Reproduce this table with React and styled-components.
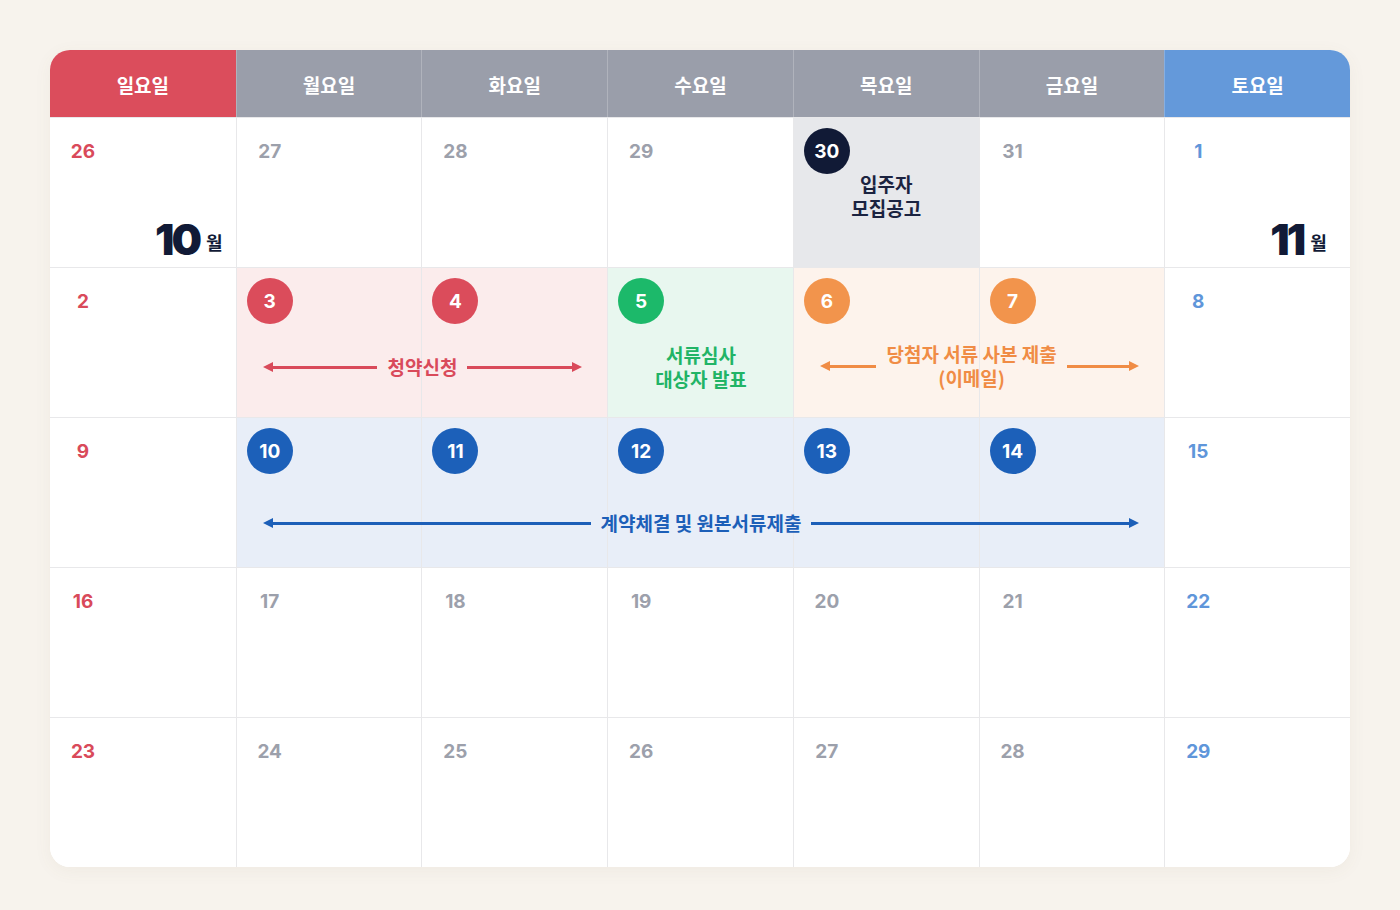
import React from "react";
import styled, { createGlobalStyle } from "styled-components";

const GlobalStyle = createGlobalStyle`
  body {
    margin: 0;
    background: #f7f3ed;
    font-family: Inter, "Noto Sans CJK KR", sans-serif;
  }
`;

const tones = {
  red: { solid: "#db4c5b", text: "#d94a5a", soft: "#fbecec" },
  green: { solid: "#1cb96a", text: "#21b466", soft: "#e8f7ef" },
  orange: { solid: "#f2944c", text: "#f08c45", soft: "#fdf3ec" },
  blue: { solid: "#1c60b9", text: "#1c5fb8", soft: "#e8eef8" },
  navy: { solid: "#111a36", text: "#1b2340", soft: "#e7e8eb" },
};

const headColors = { sun: "#db4d5c", week: "#9a9eaa", sat: "#6499da" };
const dateColors = { sun: "#d94a5a", week: "#9ca0ab", sat: "#5f96da" };

const Page = styled.div`
  padding: 50px;
`;

const Card = styled.div`
  width: 1300px;
  background: #fff;
  border-radius: 20px;
  overflow: hidden;
  box-shadow: 0 4px 18px rgba(120, 100, 70, 0.06);
`;

const HeadRow = styled.div`
  display: grid;
  grid-template-columns: repeat(7, 1fr);
  height: 67px;
`;

const HeadCell = styled.div`
  display: flex;
  align-items: center;
  justify-content: center;
  padding-top: 2px;
  background: ${(p) => headColors[p.$kind]};
  border-left: ${(p) => (p.$first ? "none" : "1px solid rgba(255,255,255,0.22)")};
  color: #fff;
  font-family: "Noto Sans CJK KR", sans-serif;
  font-weight: 700;
  font-size: 19px;
`;

const Week = styled.div`
  display: grid;
  grid-template-columns: repeat(7, 1fr);
  grid-template-rows: 149px;
  border-top: 1px solid #e8e8ea;
`;

const Cell = styled.div`
  grid-row: 1;
  grid-column: ${(p) => p.$col};
  display: flex;
  flex-direction: column;
  padding: 10px;
  background: ${(p) => (p.$tone ? tones[p.$tone].soft : "#fff")};
  border-left: ${(p) => (p.$col === 1 ? "none" : "1px solid #e8e8ea")};
  min-width: 0;
`;

const DateBadge = styled.div`
  width: 46px;
  height: 46px;
  border-radius: 50%;
  display: flex;
  align-items: center;
  justify-content: center;
  flex-shrink: 0;
  background: ${(p) => (p.$tone ? tones[p.$tone].solid : "transparent")};
  color: ${(p) => (p.$tone ? "#fff" : dateColors[p.$kind])};
  font-family: Inter, sans-serif;
  font-weight: 700;
  font-size: 19px;
`;

const Note = styled.div`
  margin-top: -2px;
  text-align: center;
  font-family: "Noto Sans CJK KR", sans-serif;
  font-weight: 600;
  font-size: 19px;
  line-height: 24px;
  color: #1b2340;
`;

const MonthTag = styled.div`
  margin-top: auto;
  margin-left: 95px;
  margin-bottom: -4px;
  display: flex;
  align-items: center;
  gap: 7px;
  color: #111a36;
`;

const MonthNum = styled.span`
  font-family: Inter, sans-serif;
  font-weight: 900;
  font-size: 43px;
  letter-spacing: -3px;
  line-height: 1;
`;

const MonthWord = styled.span`
  margin-top: 5px;
  font-family: "Noto Sans CJK KR", sans-serif;
  font-weight: 700;
  font-size: 18px;
`;

const Span = styled.div`
  grid-row: 1;
  grid-column: ${(p) => p.$from} / ${(p) => p.$to};
  align-self: start;
  margin-top: ${(p) => p.$top}px;
  height: 50px;
  padding: 0 25px 0 27px;
  display: flex;
  align-items: center;
  justify-content: center;
  gap: 10px;
  z-index: 1;
  pointer-events: none;
  color: ${(p) => tones[p.$tone].text};
`;

const Label = styled.div`
  text-align: center;
  white-space: nowrap;
  font-family: "Noto Sans CJK KR", sans-serif;
  font-weight: 700;
  font-size: 19px;
  line-height: 24px;
`;

const Arrow = styled.div`
  flex: ${(p) => p.$grow || 1};
  display: flex;
  align-items: center;
  flex-direction: ${(p) => (p.$dir === "left" ? "row" : "row-reverse")};

  &::before {
    content: "";
    width: 0;
    height: 0;
    border-top: 5px solid transparent;
    border-bottom: 5px solid transparent;
    ${(p) => (p.$dir === "left" ? "border-right" : "border-left")}: 10px solid currentColor;
  }

  &::after {
    content: "";
    flex: 1;
    height: 3px;
    background: currentColor;
  }
`;

const headers = [
  ["일요일", "sun"],
  ["월요일", "week"],
  ["화요일", "week"],
  ["수요일", "week"],
  ["목요일", "week"],
  ["금요일", "week"],
  ["토요일", "sat"],
];

const weeks = [
  {
    days: [
      { d: 26, month: "10" },
      { d: 27 },
      { d: 28 },
      { d: 29 },
      { d: 30, tone: "navy", note: ["입주자", "모집공고"] },
      { d: 31 },
      { d: 1, month: "11" },
    ],
    spans: [],
  },
  {
    days: [
      { d: 2 },
      { d: 3, tone: "red" },
      { d: 4, tone: "red" },
      { d: 5, tone: "green" },
      { d: 6, tone: "orange" },
      { d: 7, tone: "orange" },
      { d: 8 },
    ],
    spans: [
      { from: 2, to: 4, tone: "red", top: 74, lines: ["청약신청"], arrows: [1, 1] },
      { from: 4, to: 5, tone: "green", top: 74, lines: ["서류심사", "대상자 발표"] },
      {
        from: 5,
        to: 7,
        tone: "orange",
        top: 73,
        lines: ["당첨자 서류 사본 제출", "(이메일)"],
        arrows: [57, 73],
      },
    ],
  },
  {
    days: [
      { d: 9 },
      { d: 10, tone: "blue" },
      { d: 11, tone: "blue" },
      { d: 12, tone: "blue" },
      { d: 13, tone: "blue" },
      { d: 14, tone: "blue" },
      { d: 15 },
    ],
    spans: [
      { from: 2, to: 7, tone: "blue", top: 80, lines: ["계약체결 및 원본서류제출"], arrows: [1, 1] },
    ],
  },
  {
    days: [16, 17, 18, 19, 20, 21, 22].map((d) => ({ d })),
    spans: [],
  },
  {
    days: [23, 24, 25, 26, 27, 28, 29].map((d) => ({ d })),
    spans: [],
  },
];

const kindOf = (i) => (i === 0 ? "sun" : i === 6 ? "sat" : "week");

const App = () => {
  return (
    <Page>
      <GlobalStyle />
      <Card>
        <HeadRow>
          {headers.map(([name, kind], i) => (
            <HeadCell key={name} $kind={kind} $first={i === 0}>
              {name}
            </HeadCell>
          ))}
        </HeadRow>
        {weeks.map((week, w) => (
          <Week key={w}>
            {week.days.map((day, i) => (
              <Cell key={i} $col={i + 1} $tone={day.tone}>
                <DateBadge $tone={day.tone} $kind={kindOf(i)}>
                  {day.d}
                </DateBadge>
                {day.note && (
                  <Note>
                    {day.note.map((line) => (
                      <div key={line}>{line}</div>
                    ))}
                  </Note>
                )}
                {day.month && (
                  <MonthTag>
                    <MonthNum>{day.month}</MonthNum>
                    <MonthWord>월</MonthWord>
                  </MonthTag>
                )}
              </Cell>
            ))}
            {week.spans.map((s, k) => (
              <Span key={k} $from={s.from} $to={s.to} $tone={s.tone} $top={s.top}>
                {s.arrows && <Arrow $dir="left" $grow={s.arrows[0]} />}
                <Label>
                  {s.lines.map((line) => (
                    <div key={line}>{line}</div>
                  ))}
                </Label>
                {s.arrows && <Arrow $dir="right" $grow={s.arrows[1]} />}
              </Span>
            ))}
          </Week>
        ))}
      </Card>
    </Page>
  );
};

export default App;
